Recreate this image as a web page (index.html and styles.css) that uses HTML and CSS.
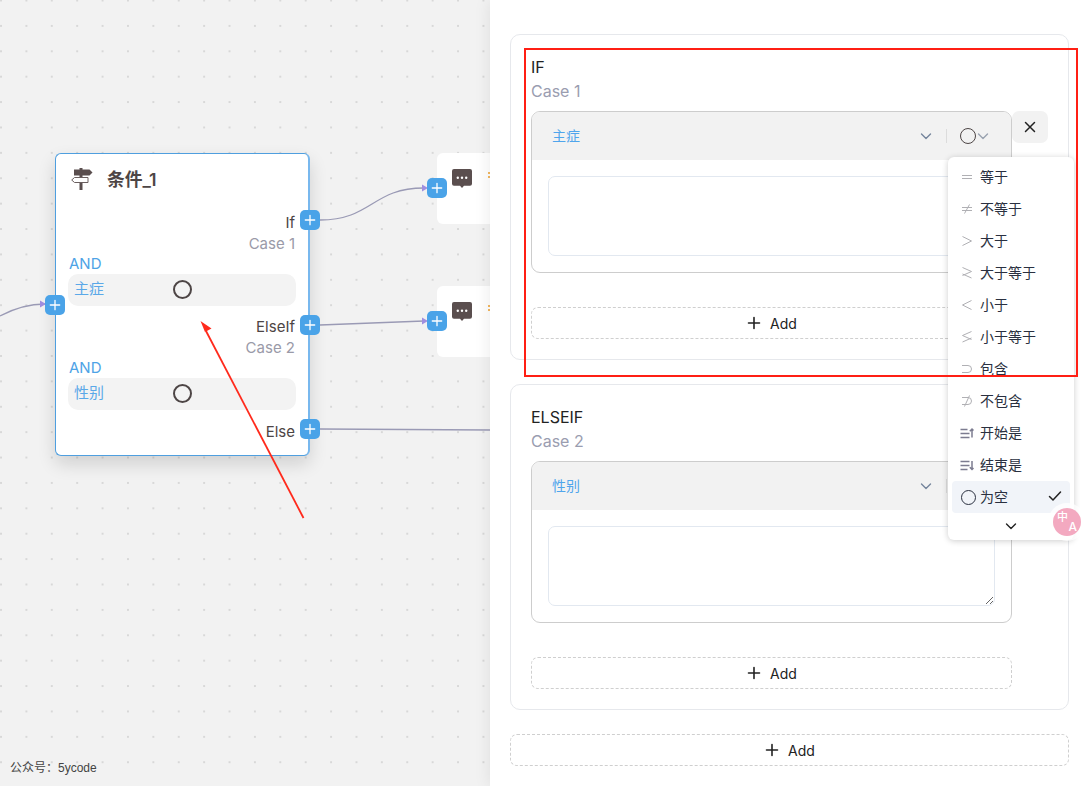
FILE: index.html
```html
<!DOCTYPE html>
<html lang="zh">
<head>
<meta charset="utf-8">
<title>条件节点</title>
<link rel="stylesheet" href="styles.css">
</head>
<body>
<svg class="defs" width="0" height="0" aria-hidden="true">
  <defs>
    <symbol id="plus" viewBox="0 0 20 20"><path d="M10 4.500v11M4.500 10h11" fill="none" stroke="currentColor" stroke-width="1.600" stroke-linecap="round"/></symbol>
    <symbol id="plus-port" viewBox="0 0 20 20"><path d="M10 5.300v9.400M5.300 10h9.400" fill="none" stroke="currentColor" stroke-width="1.300" stroke-linecap="round"/></symbol>
    <symbol id="chev" viewBox="0 0 12 12"><path d="M1.500 4l4.500 4.500L10.500 4" fill="none" stroke="currentColor" stroke-width="1.400" stroke-linecap="round" stroke-linejoin="round"/></symbol>
    <symbol id="chat" viewBox="0 0 20 20"><path d="M2 0h16a2 2 0 0 1 2 2v12.700a2 2 0 0 1-2 2h-6L10 19l-2-2.300H2a2 2 0 0 1-2-2V2a2 2 0 0 1 2-2z" fill="#5a4e4e"/><circle cx="5.800" cy="8.700" r="1.200" fill="#fff"/><circle cx="10" cy="8.700" r="1.200" fill="#fff"/><circle cx="14.200" cy="8.700" r="1.200" fill="#fff"/></symbol>
  </defs>
</svg>

<main class="canvas">
  <svg class="edges" width="490" height="786" viewBox="0 0 490 786" aria-hidden="true">
    <g fill="none" stroke="#9a9ab5" stroke-width="1.300">
      <path d="M0 316C15 308 28 304 45 304"/>
      <path d="M320 220C372 220 372 188 424 188"/>
      <path d="M320 325L424 321"/>
      <path d="M320 429L490 430"/>
    </g>
    <g fill="#a08fe0">
      <path d="M40 300.500l6 3.500-6 3.500z"/>
      <path d="M422 184.500l6 3.500-6 3.500z"/>
      <path d="M422 317.500l6 3.500-6 3.500z"/>
    </g>
  </svg>

  <section class="node">
    <header class="node-head">
      <svg class="sign" width="22" height="24" viewBox="0 0 22 24" aria-hidden="true">
        <rect x="8.500" y="0" width="3" height="22" fill="#5a4e4e"/>
        <path d="M3 1.500h15.500l3 3-3 3H3z" fill="#5a4e4e"/>
        <path d="M17 9.500H3.500L.7 12l2.800 2.500H17z" fill="#fff" stroke="#6a5f5f" stroke-width="1"/>
      </svg>
      <h2 class="node-title">条件_1</h2>
    </header>
    <div class="branch branch-first">
      <div class="b-name">If</div>
      <div class="b-case">Case 1</div>
      <div class="b-and">AND</div>
      <div class="pill"><span class="pill-key">主症</span><span class="pill-ring"></span></div>
    </div>
    <div class="branch branch-mid">
      <div class="b-name">ElseIf</div>
      <div class="b-case">Case 2</div>
      <div class="b-and">AND</div>
      <div class="pill"><span class="pill-key">性别</span><span class="pill-ring"></span></div>
    </div>
    <div class="branch">
      <div class="b-name">Else</div>
    </div>
  </section>

  <span class="port port-in"><svg width="20" height="20"><use href="#plus-port"/></svg></span>
  <span class="port port-if"><svg width="20" height="20"><use href="#plus-port"/></svg></span>
  <span class="port port-elseif"><svg width="20" height="20"><use href="#plus-port"/></svg></span>
  <span class="port port-else"><svg width="20" height="20"><use href="#plus-port"/></svg></span>

  <div class="mini mini-a"><svg class="chat" width="20" height="20"><use href="#chat"/></svg><i class="spark"></i></div>
  <div class="mini mini-b"><svg class="chat" width="20" height="20"><use href="#chat"/></svg><i class="spark"></i></div>
  <span class="port port-a"><svg width="20" height="20"><use href="#plus-port"/></svg></span>
  <span class="port port-b"><svg width="20" height="20"><use href="#plus-port"/></svg></span>

  <div class="credit">公众号：5ycode</div>
</main>

<aside class="panel">
  <section class="card">
    <div class="c-title">IF</div>
    <div class="c-case">Case 1</div>
    <div class="cond-row">
      <div class="cond">
        <div class="cond-head">
          <span class="cond-key">主症</span>
          <svg class="cond-chev" width="12" height="12"><use href="#chev"/></svg>
          <span class="cond-div"></span>
          <span class="cond-ring"></span>
          <svg class="cond-chev2" width="12" height="12"><use href="#chev"/></svg>
        </div>
        <div class="cond-body"><textarea class="ta"></textarea></div>
      </div>
      <button class="close" type="button" aria-label="close"><svg width="12" height="12" viewBox="0 0 12 12"><path d="M1.500 1.500l9 9M10.500 1.500l-9 9" fill="none" stroke="#222" stroke-width="1.500" stroke-linecap="round"/></svg></button>
    </div>
    <button class="add add-inner" type="button"><svg width="20" height="20"><use href="#plus"/></svg>Add</button>
  </section>

  <section class="card">
    <div class="c-title">ELSEIF</div>
    <div class="c-case">Case 2</div>
    <div class="cond-row">
      <div class="cond">
        <div class="cond-head">
          <span class="cond-key">性别</span>
          <svg class="cond-chev" width="12" height="12"><use href="#chev"/></svg>
          <span class="cond-div"></span>
        </div>
        <div class="cond-body"><textarea class="ta"></textarea></div>
      </div>
    </div>
    <button class="add add-inner" type="button"><svg width="20" height="20"><use href="#plus"/></svg>Add</button>
  </section>

  <button class="add add-outer" type="button"><svg width="20" height="20"><use href="#plus"/></svg>Add</button>
</aside>

<ul class="menu">
  <li class="mi"><svg class="mi-ic" width="14" height="14" viewBox="0 0 14 14"><path d="M2 5.500h10M2 8.500h10"/></svg>等于</li>
  <li class="mi"><svg class="mi-ic" width="14" height="14" viewBox="0 0 14 14"><path d="M2 5.500h10M2 8.500h10M9.500 2.500l-5 9"/></svg>不等于</li>
  <li class="mi"><svg class="mi-ic" width="14" height="14" viewBox="0 0 14 14"><path d="M2.500 2.500L11.500 7l-9 4.500"/></svg>大于</li>
  <li class="mi"><svg class="mi-ic" width="14" height="14" viewBox="0 0 14 14"><path d="M2.500 1.500L11.500 5.500l-9 4M2.500 8l9 4"/></svg>大于等于</li>
  <li class="mi"><svg class="mi-ic" width="14" height="14" viewBox="0 0 14 14"><path d="M11.500 2.500L2.500 7l9 4.500"/></svg>小于</li>
  <li class="mi"><svg class="mi-ic" width="14" height="14" viewBox="0 0 14 14"><path d="M11.500 1.500L2.500 5.500l9 4M11.500 8l-9 4"/></svg>小于等于</li>
  <li class="mi"><svg class="mi-ic" width="14" height="14" viewBox="0 0 14 14"><path d="M2 3.500h6a3.500 3.500 0 0 1 0 7H2"/></svg>包含</li>
  <li class="mi"><svg class="mi-ic" width="14" height="14" viewBox="0 0 14 14"><path d="M2 3.500h6a3.500 3.500 0 0 1 0 7H2M9.500 1.500l-5 11"/></svg>不包含</li>
  <li class="mi"><svg class="mi-ic mi-ic-bold" width="14" height="14" viewBox="0 0 14 14"><path d="M.5 3.500h7M.5 7.500h9M.5 11.500h9M12 11.500V3M9.800 5.200L12 3l1.500 1.500"/></svg>开始是</li>
  <li class="mi"><svg class="mi-ic mi-ic-bold" width="14" height="14" viewBox="0 0 14 14"><path d="M.5 3.500h9M.5 7.500h9M.5 11.500h7M12 3v8.500M9.800 9.300L12 11.500l1.500-1.500"/></svg>结束是</li>
  <li class="mi mi-on"><span class="mi-ring"></span>为空<svg class="mi-check" width="14" height="14" viewBox="0 0 14 14"><path d="M1.500 7.500l3.500 3.500 7.500-8" fill="none" stroke="#222" stroke-width="1.500" stroke-linecap="round" stroke-linejoin="round"/></svg></li>
  <li class="mi-more"><svg width="12" height="12"><use href="#chev"/></svg></li>
</ul>

<div class="badge"><span class="badge-zh">中</span><span class="badge-a">A</span></div>

<div class="red-box"></div>
<svg class="red-arrow" width="120" height="210" viewBox="195 315 120 210" aria-hidden="true">
  <path d="M303.500 518L206 331" fill="none" stroke="#ff2a1c" stroke-width="1.800"/>
  <path d="M200.500 321l11 7.500-6.500 3.500z" fill="#ff2a1c"/>
</svg>
</body>
</html>
```
FILE: styles.css
```css
* { box-sizing: border-box; }
html, body { height: 100%; }
body {
  margin: 0;
  width: 1088px;
  height: 786px;
  overflow: hidden;
  position: relative;
  display: flex;
  background: #fff;
  color: #222;
  font-family: Inter, "Noto Sans CJK SC", sans-serif;
  font-size: 14px;
}
.defs { position: absolute; }

/* canvas */
.canvas {
  position: relative;
  width: 490px;
  height: 786px;
  flex: none;
  background-color: #f2f2f2;
  background-image: radial-gradient(circle, #cdcdcd 0.6px, transparent 0.9px);
  background-size: 25.4px 25.4px;
  background-position: -11.700px -12.200px;
}
.edges { position: absolute; left: 0; top: 0; }

.node {
  position: absolute;
  left: 55px;
  top: 153px;
  width: 255px;
  height: 303px;
  background: #fff;
  border: 1px solid #4f9fdf;
  border-right: 2px solid #78b8ee;
  border-radius: 6px;
  padding: 0 13px;
  box-shadow: 0 8px 18px rgba(0, 0, 0, .14);
  color: #4a4a4a;
  font-size: 15px;
  line-height: 21px;
}
.node-head { display: flex; align-items: center; height: 50px; padding-left: 2px; }
.sign { flex: none; margin-top: 2px; }
.node-title {
  margin: 0 0 0 14px;
  font-size: 17.800px;
  font-weight: 600;
  color: #4d4545;
}
.branch-first { margin-top: 8px; }
.branch { margin-bottom: 10px; }
.branch-mid { margin-bottom: 11px; }
.b-name { text-align: right; color: #4d4545; }
.b-case { text-align: right; color: #9a9aa8; }
.b-and { color: #4ea3e6; line-height: 20px; }
.pill {
  position: relative;
  display: flex;
  align-items: center;
  height: 32px;
  margin: 0 -1px;
  padding: 0 0 3px 6px;
  background: #f3f3f3;
  border-radius: 10px;
}
.pill-key { color: #5aa8e8; }
.pill-ring {
  position: absolute;
  left: 105px;
  top: 6px;
  width: 19px;
  height: 19px;
  border: 2px solid #4d4545;
  border-radius: 50%;
}

.port {
  position: absolute;
  width: 20px;
  height: 20px;
  background: #4aa3e8;
  color: #fff;
  border-radius: 5px;
  display: flex;
}
.port-in { left: 45px; top: 295px; }
.port-if { left: 300px; top: 210px; }
.port-elseif { left: 300px; top: 315px; }
.port-else { left: 300px; top: 419px; }
.port-a { left: 427px; top: 178px; }
.port-b { left: 427px; top: 311px; }

.mini {
  position: absolute;
  left: 437px;
  width: 53px;
  height: 71px;
  background: #fff;
  border-radius: 6px 0 0 6px;
  padding: 16px 0 0 15px;
}
.mini-a { top: 153px; }
.mini-b { top: 286px; }
.chat { display: block; }
.spark {
  position: absolute;
  right: 0;
  top: 19px;
  width: 2px;
  height: 8px;
  background: repeating-linear-gradient(#f4b860 0 2px, transparent 2px 4px);
}
.credit {
  position: absolute;
  left: 10px;
  top: 760px;
  font-family: "Liberation Sans", "Noto Sans CJK SC", sans-serif;
  font-size: 12px;
  line-height: 16px;
  color: #444;
}

/* panel */
.panel {
  position: relative;
  flex: none;
  width: 598px;
  height: 786px;
  padding: 34px 19px 0 20px;
  background: #fff;
  box-shadow: 0 0 16px rgba(0, 0, 0, .09);
}
.card {
  border: 1px solid #e6e8ec;
  border-radius: 10px;
  padding: 20px;
  margin-bottom: 24px;
  height: 326px;
}
.c-title { font-size: 16px; line-height: 24px; color: #222; }
.c-case { font-size: 16px; line-height: 24px; color: #9a9db0; }
.cond-row { display: flex; align-items: flex-start; margin-top: 8px; }
.cond {
  flex: none;
  width: 481px;
  height: 162px;
  border: 1px solid #cdcdcd;
  border-radius: 9px;
  overflow: hidden;
}
.cond-head {
  position: relative;
  height: 48px;
  background: #f2f2f2;
  display: flex;
  align-items: center;
  padding: 0 0 3px 20px;
}
.cond-key { color: #4fa5ec; font-size: 14px; }
.cond-chev { position: absolute; left: 388px; top: 18px; color: #75859c; }
.cond-div { position: absolute; left: 414px; top: 17px; width: 1px; height: 14px; background: #dcdcdc; }
.cond-ring {
  position: absolute;
  left: 427.500px;
  top: 16px;
  width: 16px;
  height: 16px;
  border: 1.500px solid #4d4545;
  border-radius: 50%;
}
.cond-chev2 { position: absolute; left: 445px; top: 18px; color: #9aa3b0; }
.cond-body { padding: 16px; }
.ta {
  display: block;
  width: 447px;
  height: 80px;
  padding: 8px 12px;
  border: 1px solid #e2e8f0;
  border-radius: 7px;
  background: #fff;
  resize: both;
  outline: none;
  font-family: inherit;
}
.close {
  flex: none;
  display: flex;
  align-items: center;
  justify-content: center;
  width: 36px;
  height: 32px;
  padding: 0;
  border: 0;
  border-radius: 7px;
  background: #f2f2f2;
}
.add {
  display: flex;
  align-items: center;
  justify-content: center;
  gap: 2px;
  height: 32px;
  padding: 0 2px 0 0;
  background: #fff;
  border: 1px dashed #cfcfcf;
  border-radius: 7px;
  color: #222;
  font-family: inherit;
  font-size: 14px;
  font-weight: 400;
}
.add svg { margin-right: 4px; }
.add-inner { width: 481px; margin-top: 34px; }
.add-outer { width: 559px; }

/* dropdown */
.menu {
  position: absolute;
  left: 948px;
  top: 157px;
  width: 126px;
  height: 383px;
  margin: 0;
  padding: 4px;
  list-style: none;
  background: #fff;
  border-radius: 6px;
  box-shadow: 0 1px 6px rgba(0, 0, 0, .2);
  color: #2a3040;
}
.mi {
  position: relative;
  display: flex;
  align-items: center;
  height: 32px;
  padding-left: 28px;
  line-height: 32px;
  border-radius: 4px;
}
.mi-ic {
  position: absolute;
  left: 8px;
  top: 9px;
  fill: none;
  stroke: #b0b0b4;
  stroke-width: 1;
}
.mi-ic-bold { stroke: #7c7c90; stroke-width: 1.500; }
.mi-on { background: #f1f4f9; }
.mi-ring {
  position: absolute;
  left: 9px;
  top: 9px;
  width: 15px;
  height: 15px;
  border: 1.500px solid #2a3040;
  border-radius: 50%;
}
.mi-check { position: absolute; right: 8px; top: 8px; }
.mi-more { display: flex; justify-content: center; padding-top: 7px; color: #222; }
.mi-more svg { display: block; }

.badge {
  position: absolute;
  left: 1053px;
  top: 508px;
  width: 28px;
  height: 28px;
  border-radius: 50%;
  background: #f3a9c0;
  box-shadow: 0 0 0 5px rgba(255, 255, 255, .75);
  color: #fff;
  font-weight: 500;
}
.badge-zh { position: absolute; left: 4px; top: 3px; font-size: 11px; line-height: 12px; }
.badge-a { position: absolute; right: 4px; bottom: 3px; font-size: 12px; line-height: 12px; }

/* annotations */
.red-box {
  position: absolute;
  left: 524px;
  top: 48px;
  width: 554px;
  height: 329px;
  border: 2px solid #ff1f14;
  pointer-events: none;
}
.red-arrow { position: absolute; left: 195px; top: 315px; pointer-events: none; }
```
